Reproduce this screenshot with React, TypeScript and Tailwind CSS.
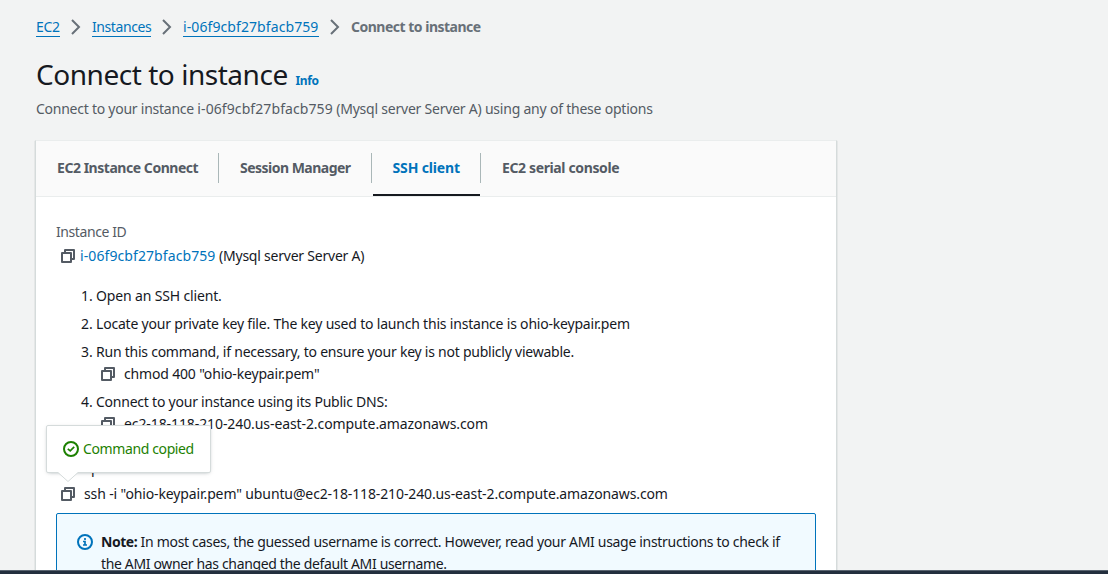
import React from 'react';

function CopyIcon() {
  return (
    <svg className="block h-4 w-4 shrink-0" viewBox="0 0 16 16" fill="none" stroke="#545b64" strokeWidth="2" strokeLinejoin="round">
      <path d="M2 5h9v9H2z" />
      <path d="M5 5V2h9v9h-3" />
    </svg>
  );
}

function Separator() {
  return (
    <svg className="block h-4 w-4 shrink-0" viewBox="0 0 16 16" fill="none" stroke="#687078" strokeWidth="2">
      <path d="M4 1l7 7-7 7" />
    </svg>
  );
}

function Crumb({ children }: { children: React.ReactNode }) {
  return <a className="block h-5 whitespace-nowrap border-b border-[#0073bb] leading-[20px] text-[#0073bb]">{children}</a>;
}

export default function App() {
  return (
    <div className="relative h-[574px] w-full overflow-hidden bg-[#f2f3f3] font-['Noto_Sans','Open_Sans',sans-serif] text-[14px] leading-[22px] text-[#16191f]">
      <div className="flex flex-col pl-[35px]">
        <nav className="mt-[17px] flex h-5 items-center pl-px">
          <div className="w-6 tracking-[-0.3px]"><Crumb>EC2</Crumb></div>
          <div className="ml-2 mr-2"><Separator /></div>
          <div className="w-[59px] tracking-[-0.41px]"><Crumb>Instances</Crumb></div>
          <div className="ml-2 mr-2"><Separator /></div>
          <div className="w-[136px] tracking-[0.09px]"><Crumb>i-06f9cbf27bfacb759</Crumb></div>
          <div className="ml-2 mr-2"><Separator /></div>
          <span className="whitespace-nowrap font-bold tracking-[-0.5px] text-[#687078]">Connect to instance</span>
        </nav>

        <header className="pl-px">
          <div className="mt-[19px] flex h-9 items-baseline whitespace-nowrap">
            <h1 className="w-[259.5px] text-[28px] leading-[36px] tracking-[-0.46px]">Connect to instance</h1>
            <a className="text-[12px] font-bold tracking-[-0.4px] text-[#0073bb]">Info</a>
          </div>
          <p className="mt-[6px] whitespace-nowrap tracking-[-0.22px] text-[#545b64]">
            <span className="tracking-[-0.25px]">Connect to your instance </span>
            <span className="tracking-[0.09px]">i-06f9cbf27bfacb759</span> (Mysql server Server A) using any of these options
          </p>
        </header>

        <section className="mt-[20px] h-[434px] w-[802px] border border-[#d5dbdb] border-t-[#eaeded] bg-white shadow-[0_1px_1px_0_rgba(0,28,36,0.3)]">
          <div className="flex h-14 items-start border-b border-[#eaeded] bg-[#fafafa] pt-3 font-bold text-[#545b64]">
            <div className="h-[30px] w-[183px] whitespace-nowrap border-r border-[#aab7b8] pl-[21px] pt-1 tracking-[-0.46px]">EC2 Instance Connect</div>
            <div className="h-[30px] w-[153px] whitespace-nowrap border-r border-[#aab7b8] pl-[21px] pt-1 tracking-[-0.52px]">Session Manager</div>
            <div className="flex h-[43px] w-[109px] flex-col justify-between">
              <div className="h-[30px] whitespace-nowrap border-r border-[#aab7b8] pl-[20.5px] pt-1 tracking-[-0.15px] text-[#0073bb]">SSH client</div>
              <div className="ml-px h-0.5 w-[107px] bg-[#16191f]" />
            </div>
            <div className="h-[30px] whitespace-nowrap pl-[21px] pt-1 tracking-[-0.37px]">EC2 serial console</div>
          </div>

          <div className="flex flex-col whitespace-nowrap px-5 pt-6">
            <div className="tracking-[-0.42px] text-[#545b64]">Instance ID</div>
            <div className="mt-0.5 flex items-center pl-1">
              <CopyIcon />
              <a className="ml-1 w-[139px] tracking-[0.09px] text-[#0073bb]">i-06f9cbf27bfacb759</a>
              <span className="tracking-[-0.22px]">(Mysql server Server A)</span>
            </div>

            <ol className="mt-[18px] flex flex-col gap-1.5 pl-[25px]">
              <li className="flex"><span className="w-[15px]">1.</span><span className="tracking-[-0.15px]">Open an SSH client.</span></li>
              <li className="flex"><span className="w-[15px]">2.</span><span className="tracking-[-0.2px]">Locate your private key file. The key used to launch this instance is ohio-keypair.pem</span></li>
              <li className="flex">
                <span className="w-[15px]">3.</span>
                <div>
                  <div className="tracking-[-0.24px]">Run this command, if necessary, to ensure your key is not publicly viewable.</div>
                  <div className="flex items-center gap-2 pl-1"><CopyIcon /><span className="tracking-[-0.17px]">chmod 400 "ohio-keypair.pem"</span></div>
                </div>
              </li>
              <li className="flex">
                <span className="w-[15px]">4.</span>
                <div>
                  <div className="tracking-[-0.23px]">Connect to your instance using its Public DNS:</div>
                  <div className="flex items-center gap-2 pl-1"><CopyIcon /><span className="tracking-[-0.09px]">ec2-18-118-210-240.us-east-2.compute.amazonaws.com</span></div>
                </div>
              </li>
            </ol>

            <div className="mt-[22px] tracking-[-0.3px]">Example:</div>
            <div className="relative mt-[4px] flex items-center gap-2 pl-1">
              <CopyIcon />
              <span className="tracking-[-0.12px]">ssh -i "ohio-keypair.pem" ubuntu@ec2-18-118-210-240.us-east-2.compute.amazonaws.com</span>
              <div className="absolute -left-2.5 -top-[58px] z-10 flex h-12 w-[165px] items-center rounded-[2px] border border-[#d5dbdb] bg-white pl-4 text-[#1d8102] shadow-[0_1px_4px_-2px_rgba(0,28,36,0.5)]">
                <svg className="block h-4 w-4 shrink-0" viewBox="0 0 16 16" fill="none" stroke="currentColor" strokeWidth="2">
                  <circle cx="8" cy="8" r="7" />
                  <path d="M4.8 7.8l2.4 2.1 4-4" strokeWidth="1.7" />
                </svg>
                <span className="ml-1 tracking-[-0.38px]">Command copied</span>
                <svg className="absolute left-[11px] top-[45px] block h-[11px] w-5" viewBox="0 0 20 11">
                  <path d="M0 0h20v1.5L10 10.5 0 1.5z" fill="white" />
                  <path d="M0 1.5l10 9 10-9" fill="none" stroke="#d5dbdb" />
                </svg>
              </div>
            </div>

            <div className="mt-2 flex h-20 rounded-[2px] border border-[#0073bb] bg-[#f1faff] pl-5 pt-[17px]">
              <svg className="mt-[3px] block h-4 w-4 shrink-0" viewBox="0 0 16 16" fill="none" stroke="#0073bb" strokeWidth="2">
                <circle cx="8" cy="8" r="7" />
                <path d="M8 11V7.5H6M6 11h4M8 4v2" strokeWidth="1.7" />
              </svg>
              <div className="ml-2">
                <div className="tracking-[-0.31px]"><b className="tracking-[-0.45px]">Note:</b> In most cases, the guessed username is correct. However, read your AMI usage instructions to check if</div>
                <div className="tracking-[-0.35px]">the AMI owner has changed the default AMI username.</div>
              </div>
            </div>
          </div>
        </section>
      </div>
      <div className="absolute inset-x-0 bottom-0 h-1 border-t border-[#596470] bg-[#232f3e]" />
    </div>
  );
}
